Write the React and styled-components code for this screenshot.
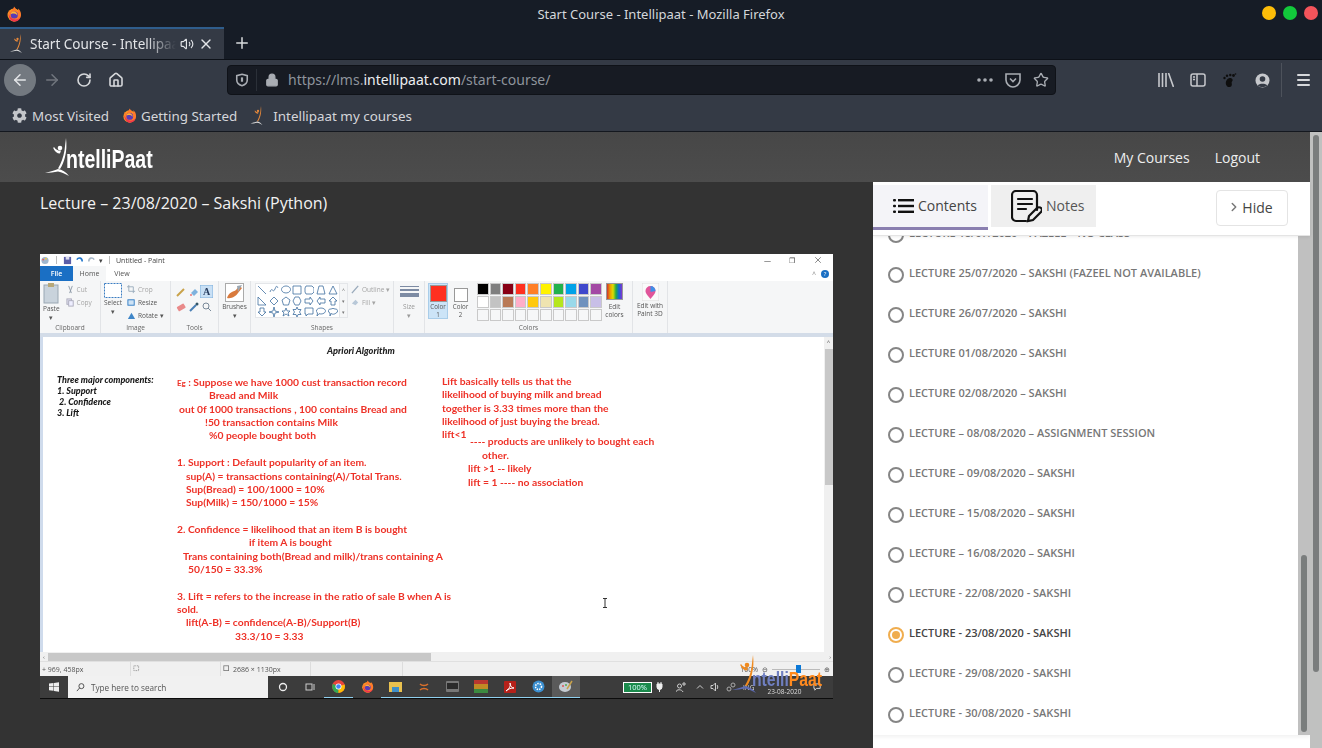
import React from "react";
import styled, { createGlobalStyle } from "styled-components";
import { FaCog } from "react-icons/fa";
import {
  ArrowLeft,
  ArrowRight,
  RotateCw,
  Home,
  Lock,
  Star,
  Plus,
  X,
  Volume2,
  ChevronRight,
} from "lucide-react";

const lectures = [
  "LECTURE 18/07/2020 – FAZEEL – NO CLASS",
  "LECTURE 25/07/2020 – SAKSHI (FAZEEL NOT AVAILABLE)",
  "LECTURE 26/07/2020 – SAKSHI",
  "LECTURE 01/08/2020 – SAKSHI",
  "LECTURE 02/08/2020 – SAKSHI",
  "LECTURE – 08/08/2020 – ASSIGNMENT SESSION",
  "LECTURE – 09/08/2020 – SAKSHI",
  "LECTURE – 15/08/2020 – SAKSHI",
  "LECTURE – 16/08/2020 – SAKSHI",
  "LECTURE - 22/08/2020 - SAKSHI",
  "LECTURE - 23/08/2020 - SAKSHI",
  "LECTURE - 29/08/2020 - SAKSHI",
  "LECTURE - 30/08/2020 - SAKSHI",
];

const redLines = [
  [0, <><small>Eg</small> : Suppose we have 1000 cust transaction record</>],
  [32, "Bread and Milk"],
  [2, "out 0f 1000 transactions , 100 contains Bread and"],
  [28, "!50 transaction contains Milk"],
  [32, "%0 people bought both"],
  [0, ""],
  [0, "1. Support : Default popularity of an item."],
  [9, "sup(A) = transactions containing(A)/Total Trans."],
  [9, "Sup(Bread) = 100/1000 = 10%"],
  [9, "Sup(Milk) = 150/1000 = 15%"],
  [0, ""],
  [0, "2. Confidence = likelihood that an item B is bought"],
  [72, "if item A is bought"],
  [6, "Trans containing both(Bread and milk)/trans containing A"],
  [11, "50/150 = 33.3%"],
  [0, ""],
  [0, "3. Lift = refers to the increase in the ratio of sale B when A is"],
  [0, "sold."],
  [9, "lift(A-B) = confidence(A-B)/Support(B)"],
  [58, "33.3/10 = 3.33"],
];

const liftLines = [
  [0, "Lift basically tells us that the"],
  [0, "likelihood of buying milk and bread"],
  [0, "together is 3.33 times more than the"],
  [0, "likelihood of just buying the bread."],
  [0, "lift<1", 7],
  [28, "---- products are unlikely to bought each"],
  [40, "other."],
  [26, "lift >1 -- likely"],
  [26, "lift = 1 ---- no association"],
];

const swatches = [
  "#000000", "#7f7f7f", "#880015", "#ff3020", "#ff7f27", "#fff200", "#22b14c", "#00a2e8", "#3f48cc", "#a349a4",
  "#ffffff", "#c3c3c3", "#b97a57", "#ffaec9", "#ffc90e", "#efe4b0", "#b5e61d", "#99d9ea", "#7092be", "#c8bfe7",
  "none", "none", "none", "none", "none", "none", "none", "none", "none", "none",
];

const shapePaths = [
  "M1 1L9 9", "M1 7C3 1 4 9 6 4S8 2 9 3", "M5 1a4.5 3.5 0 1 0 .01 0", "M1 1h8v8H1z", "M2 1h6l2 2v4l-2 2H2L1 7V3z", "M1 9L3 1h4l2 8z", "M5 1l4 8H1z",
  "M1 1v8h8z", "M5 1l4 4-4 4-4-4z", "M5 1l4 3-1.500 5h-5L1 4z", "M3 1h4l2 4-2 4H3L1 5z", "M1 3h5V1l3 4-3 4V7H1z", "M9 3H4V1L1 5l3 4V7h5z", "M5 1l4 4H7v4H3V5H1z",
  "M5 9l4-4H7V1H3v4H1z", "M5 0l1 4 4 1-4 1-1 4-1-4-4-1 4-1z", "M5 1l1.200 3H9L7 6l1 3-3-2-3 2 1-3-2-2h2.800z", "M5 0l1 2.500h3L7.500 5 9 7.500H6L5 10 4 7.500H1L2.500 5 1 2.500h3z", "M1 1h8v6H4L2 9V7H1z", "M5 1a4.500 3 0 1 1-2 5.700L1 9l.5-3A4.500 3 0 0 1 5 1z", "M3 2a3 2 0 0 1 4 0 2 2 0 0 1 1 4 3 2 0 0 1-5 .5L2 9V6a2 2 0 0 1 1-4z",
];

const GlobalStyle = createGlobalStyle`
  html, body {
    margin: 0;
    padding: 0;
    height: 100%;
    overflow: hidden;
    background: #333;
  }
  * {
    box-sizing: border-box;
  }
  body {
    font-family: "Noto Sans", "Open Sans", sans-serif;
  }
`;

const Window = styled.div`
  width: 1322px;
  height: 748px;
  display: flex;
  flex-direction: column;
  overflow: hidden;
`;

const TitleBar = styled.div`
  height: 27px;
  flex: none;
  background: #161c26;
  display: flex;
  align-items: center;
  justify-content: space-between;
  padding: 0 4px 0 6px;
  color: #d4d7db;
  font-size: 13px;
`;

const TitleText = styled.span`
  padding-left: 38px;
`;

const Dots = styled.div`
  display: flex;
  gap: 7px;
  padding-bottom: 2px;
`;

const Dot = styled.span`
  width: 14px;
  height: 14px;
  border-radius: 50%;
  background: ${(p) => p.color};
`;

const TabStrip = styled.div`
  height: 33px;
  flex: none;
  background: #161c26;
  display: flex;
  align-items: stretch;
  border-bottom: 1px solid #0d1118;
`;

const Tab = styled.div`
  width: 224px;
  background: #343a45;
  border-top: 2px solid #2f5d8c;
  display: flex;
  align-items: center;
  padding: 0 10px 0 9px;
  color: #e2e4e7;
  font-size: 13.500px;
  gap: 4px;
`;

const TabTitle = styled.span`
  flex: 1;
  white-space: nowrap;
  overflow: hidden;
  mask-image: linear-gradient(to right, #000 80%, transparent 100%);
`;

const NewTab = styled.div`
  width: 36px;
  display: flex;
  align-items: center;
  justify-content: center;
  color: #d8dadd;
`;

const Toolbar = styled.div`
  height: 40px;
  flex: none;
  background: #343a45;
  display: flex;
  align-items: center;
  padding: 0 4px;
  color: #d6d8db;
`;

const BackButton = styled.div`
  width: 32px;
  height: 32px;
  border-radius: 50%;
  background: #737980;
  display: flex;
  align-items: center;
  justify-content: center;
  color: #e4e6e8;
`;

const ToolButton = styled.div`
  width: 32px;
  height: 32px;
  display: flex;
  align-items: center;
  justify-content: center;
  color: ${(p) => (p.$dim ? "#71767e" : "#d6d8db")};
`;

const UrlBar = styled.div`
  width: 829px;
  height: 30px;
  margin-left: 95px;
  background: #171b23;
  border: 1px solid #0f1218;
  border-radius: 4px;
  display: flex;
  align-items: center;
  font-size: 14px;
  color: #8e949c;
`;

const UrlIcons = styled.div`
  width: 29px;
  height: 22px;
  display: flex;
  align-items: center;
  justify-content: center;
  border-right: 1px solid #2b3038;
  color: #a9adb3;
`;

const LockSlot = styled.div`
  width: 31px;
  padding-left: 8px;
  display: flex;
  align-items: center;
  color: #a9adb3;
`;

const UrlText = styled.div`
  flex: 1;
  margin-bottom: 2px;
  b {
    font-weight: 400;
    color: #eceef0;
  }
`;

const UrlAction = styled.div`
  width: 28px;
  display: flex;
  align-items: center;
  justify-content: center;
  color: #a9adb3;
`;

const ToolbarRight = styled.div`
  display: flex;
  align-items: center;
  margin-left: 94px;
`;

const Slot = styled.div`
  width: 32px;
  display: flex;
  align-items: center;
  justify-content: center;
  color: #c6c8cc;
`;

const Divider = styled.div`
  width: 1px;
  height: 34px;
  background: #4d525b;
  margin: 0 15px 0 3px;
`;

const BookmarksBar = styled.div`
  height: 32px;
  flex: none;
  background: #343a45;
  border-bottom: 1px solid #14181f;
  display: flex;
  align-items: center;
  padding: 0 12px;
  font-size: 13.400px;
  color: #dfe1e4;
  gap: 13px;
`;

const Bookmark = styled.div`
  display: flex;
  align-items: center;
  gap: ${(p) => p.$gap || 4}px;
  color: #d4d6da;
  svg:first-child {
    flex: none;
  }
`;

const SitePage = styled.div`
  flex: 1;
  display: flex;
  min-height: 0;
`;

const PageMain = styled.div`
  flex: 1;
  display: flex;
  flex-direction: column;
  min-width: 0;
`;

const PageScrollbar = styled.div`
  width: 12px;
  background: #c0c1c0;
  padding: 3px 3px 0;
`;

const PageThumb = styled.div`
  height: 537px;
  background: #7a7d7d;
  border-radius: 3px;
`;

const SiteHeader = styled.header`
  height: 50px;
  flex: none;
  background: linear-gradient(#474747, #4c4c4c);
  display: flex;
  align-items: center;
  justify-content: space-between;
  padding: 0 50px 0 45px;
`;

const Logo = styled.div`
  display: flex;
  align-items: flex-end;
  height: 42px;
  color: ${(p) => p.$color || "#fff"};
  position: relative;
  white-space: nowrap;
`;

const LogoWord = styled.span`
  display: inline-block;
  font-family: "Liberation Sans", sans-serif;
  font-weight: 700;
  font-size: ${(p) => p.$size || 25}px;
  line-height: 1;
  margin-left: ${(p) => p.$offset ?? -9}px;
  padding-bottom: ${(p) => p.$pad ?? 6}px;
  transform: scaleX(${(p) => p.$squeeze || 0.78});
  transform-origin: left bottom;
  color: ${(p) => p.$first || "inherit"};
  em {
    font-style: normal;
    color: ${(p) => p.$second || "inherit"};
  }
`;

const SiteNav = styled.nav`
  display: flex;
  gap: 25px;
  font-family: "Open Sans", sans-serif;
  font-size: 14px;
  color: #eee;
`;

const Body = styled.div`
  flex: 1;
  display: flex;
  background: #333;
  min-height: 0;
`;

const VideoArea = styled.main`
  width: 873px;
  flex: none;
  padding: 11px 40px 0;
`;

const LectureTitle = styled.h1`
  margin: 0 0 40px;
  height: 21px;
  font-family: "Open Sans", sans-serif;
  font-weight: 400;
  font-size: 16px;
  line-height: 21px;
  color: #f2f2f2;
`;

const Sidebar = styled.aside`
  flex: 1;
  background: #fff;
  display: flex;
  flex-direction: column;
  min-height: 0;
`;

const SideTabs = styled.div`
  height: 54px;
  flex: none;
  position: relative;
  z-index: 2;
  background: #fff;
  border-bottom: 1px solid #e4e4e4;
  box-shadow: 0 1px 3px rgba(0, 0, 0, 0.08);
  display: flex;
  align-items: flex-start;
  padding: 3px 22px 0 0;
  gap: 3px;
  font-family: "Open Sans", sans-serif;
  font-size: 14px;
  color: #555;
`;

const ContentsTab = styled.div`
  width: 115px;
  height: 45px;
  background: #f4f4f8;
  border-bottom: 3px solid #8a7fb0;
  display: flex;
  align-items: center;
  padding: 0 0 1px 20px;
  gap: 4px;
  color: #444;
`;

const NotesTab = styled.div`
  width: 105px;
  height: 42px;
  background: #efefef;
  display: flex;
  align-items: center;
  padding: 0 0 2px 20px;
  gap: 4px;
  svg {
    margin-top: 2px;
  }
`;

const HideButton = styled.button`
  margin: 5px 0 0 auto;
  width: 72px;
  height: 36px;
  background: #fff;
  border: 1px solid #e4e4e4;
  border-radius: 4px;
  display: flex;
  align-items: center;
  justify-content: center;
  gap: 1px;
  font-family: "Open Sans", sans-serif;
  font-size: 14px;
  color: #444;
  padding: 0 4px 2px 0;
  svg {
    color: #777;
  }
`;

const ListWrap = styled.div`
  height: 499px;
  flex: none;
  display: flex;
  box-shadow: 0 2px 4px rgba(0, 0, 0, 0.06);
`;

const ListBody = styled.div`
  flex: 1;
  overflow: hidden;
`;

const LectureList = styled.ul`
  list-style: none;
  margin: -23px 0 0;
  padding: 0 0 0 15px;
`;

const Lecture = styled.li`
  height: 40px;
  display: flex;
  align-items: center;
  gap: 5px;
  font-family: "Open Sans", sans-serif;
  font-size: 11px;
  font-weight: 600;
  color: ${(p) => (p.$active ? "#444" : "#777")};
`;

const LectureText = styled.span`
  position: relative;
  top: -1px;
`;

const Radio = styled.span`
  width: 16px;
  height: 16px;
  flex: none;
  border-radius: 50%;
  border: 2px solid ${(p) => (p.$active ? "#f0ad4e" : "#858585")};
  position: relative;
  top: 2px;
  display: flex;
  align-items: center;
  justify-content: center;
  &::after {
    content: "";
    display: ${(p) => (p.$active ? "block" : "none")};
    width: 8px;
    height: 8px;
    border-radius: 50%;
    background: #f0ad4e;
  }
`;

const ListScrollbar = styled.div`
  width: 12px;
  flex: none;
  background: #c0c0c0;
  padding: 319px 3px 3px;
`;

const ListThumb = styled.div`
  height: 177px;
  background: #7a7d7d;
  border-radius: 3px;
`;

/* the paint screenshot playing in the lecture */
const Shot = styled.div`
  width: 793px;
  height: 445px;
  background: #fff;
  display: flex;
  flex-direction: column;
  position: relative;
  filter: blur(0.25px);
  font-family: "Open Sans", sans-serif;
  color: #555;
`;

const PaintTitle = styled.div`
  height: 12px;
  flex: none;
  display: flex;
  align-items: center;
  padding: 0 10px 0 0;
  gap: 3px;
  font-size: 7px;
  color: #444;
`;

const TitleSep = styled.span`
  width: 1px;
  height: 8px;
  background: #bbb;
  margin: 0 3px;
`;

const WindowButtons = styled.div`
  margin-left: auto;
  display: flex;
  gap: 18px;
  color: #444;
  align-items: center;
`;

const PaintMenu = styled.div`
  height: 15px;
  flex: none;
  display: flex;
  align-items: stretch;
  font-size: 7px;
  padding-right: 4px;
`;

const MenuItem = styled.div`
  width: ${(p) => p.$w}px;
  display: flex;
  align-items: center;
  justify-content: center;
  background: ${(p) => (p.$file ? "#1a6fc4" : p.$active ? "#f5f6f7" : "#fff")};
  color: ${(p) => (p.$file ? "#fff" : "#555")};
  font-weight: ${(p) => (p.$file ? 600 : 400)};
`;

const MenuRight = styled.div`
  margin-left: auto;
  display: flex;
  align-items: center;
  gap: 5px;
  color: #999;
`;

const Help = styled.span`
  width: 8px;
  height: 8px;
  border-radius: 50%;
  background: #1a6fc4;
  color: #fff;
  font-size: 6px;
  line-height: 8px;
  text-align: center;
`;

const Ribbon = styled.div`
  height: 52px;
  flex: none;
  background: #f5f6f7;
  display: flex;
`;

const RibbonGroup = styled.div`
  width: ${(p) => p.$w}px;
  flex: none;
  display: flex;
  flex-direction: column;
  border-right: 1px solid #e2e4e7;
`;

const GroupBody = styled.div`
  flex: 1;
  display: flex;
  gap: ${(p) => p.$gap || 3}px;
  padding: 2px 3px 0;
  justify-content: ${(p) => p.$justify || "flex-start"};
  min-height: 0;
`;

const GroupLabel = styled.div`
  height: 10px;
  flex: none;
  text-align: center;
  font-size: 6.500px;
  line-height: 9px;
  color: #666;
`;

const BigTool = styled.div`
  display: flex;
  flex-direction: column;
  align-items: center;
  font-size: 6.500px;
  line-height: 8px;
  color: ${(p) => p.$color || "#555"};
  width: ${(p) => (p.$w ? `${p.$w}px` : "auto")};
  text-align: center;
  gap: 1px;
`;

const SmallTools = styled.div`
  display: flex;
  flex-direction: column;
  gap: 2px;
  padding-top: 1px;
  font-size: 6.500px;
  color: ${(p) => p.$color || "#555"};
`;

const SmallTool = styled.div`
  display: flex;
  align-items: center;
  gap: 2px;
  height: 11px;
  white-space: nowrap;
  color: ${(p) => p.$color || "inherit"};
`;

const ToolGrid = styled.div`
  display: grid;
  grid-template-columns: repeat(3, 13px);
  grid-auto-rows: 15px;
  align-items: center;
  justify-items: center;
  padding-top: 1px;
`;

const ShapeBox = styled.div`
  width: 85px;
  height: 35px;
  margin-left: 1px;
  background: #fff;
  border: 1px solid #e4e6e9;
  display: grid;
  grid-template-columns: repeat(7, 1fr);
  align-items: center;
  justify-items: center;
  color: #3f6f9f;
`;

const ShapeSpin = styled.div`
  width: 8px;
  height: 35px;
  border: 1px solid #e4e6e9;
  border-left: 0;
  margin-left: -3px;
  font-size: 5px;
  display: flex;
  flex-direction: column;
  justify-content: space-around;
  align-items: center;
  color: #777;
`;

const SizeLines = styled.div`
  width: 19px;
  display: flex;
  flex-direction: column;
  gap: 2px;
  margin: 3px 0 5px;
`;

const SizeLine = styled.div`
  height: ${(p) => p.$h}px;
  background: #7d8ba3;
`;

const ColorSlot = styled.div`
  width: ${(p) => p.$w || 20}px;
  height: 36px;
  padding-top: 1px;
  background: ${(p) => (p.$on ? "#cce4f7" : "transparent")};
  border: 1px solid ${(p) => (p.$on ? "#a9cde9" : "transparent")};
  display: flex;
  flex-direction: column;
  align-items: center;
  font-size: 6.200px;
  line-height: 7.500px;
  text-align: center;
  color: #555;
`;

const ColorChip = styled.div`
  width: ${(p) => p.$s}px;
  height: ${(p) => p.$s}px;
  background: ${(p) => p.$c};
  border: 1px solid #999;
  margin: ${(p) => 17 - p.$s}px 0 1px;
`;

const Palette = styled.div`
  display: grid;
  grid-template-columns: repeat(10, 11.600px);
  grid-auto-rows: 12px;
  gap: 1px;
  margin: 0 1px 0 4px;
`;

const Swatch = styled.div`
  background: ${(p) => (p.$c === "none" ? "#f6f7f8" : p.$c)};
  border: 1px solid #c9c9c9;
`;

const RainbowChip = styled.div`
  width: 17px;
  height: 17px;
  background: linear-gradient(90deg, #c33, #e90, #dd0, #2a4, #16d, #83c);
  border: 1px solid #999;
  margin-bottom: 2px;
`;

const Strip = styled.div`
  height: 4px;
  flex: none;
  background: #d3dce8;
`;

const CanvasRow = styled.div`
  height: 315px;
  flex: none;
  display: flex;
`;

const CanvasEdge = styled.div`
  width: 3px;
  background: #cfdbec;
`;

const Canvas = styled.div`
  flex: 1;
  display: grid;
  grid-template-columns: 120px 265px 1fr;
  grid-template-rows: auto 1fr;
  padding: 8px 0 0 14px;
  font-family: Lato, "Open Sans", sans-serif;
  font-weight: 700;
  font-size: 10.300px;
  line-height: 13.370px;
  color: #ee3127;
`;

const CanvasTitle = styled.div`
  grid-column: 1 / -1;
  padding-left: 270px;
  height: 24px;
  font-size: 9.200px;
  font-style: italic;
  font-weight: 900;
  line-height: 11px;
  color: #222;
`;

const BlackNotes = styled.div`
  font-size: 9px;
  font-style: italic;
  font-weight: 900;
  line-height: 11px;
  color: #1a1a1a;
  padding-top: 5px;
  white-space: pre;
`;

const RedNotes = styled.div`
  white-space: nowrap;
  padding-top: ${(p) => p.$top}px;
  small {
    font-size: 8px;
  }
`;

const NoteLine = styled.div`
  height: ${(p) => p.$h || 13.37}px;
  padding-left: ${(p) => p.$indent}px;
`;

const VScroll = styled.div`
  width: 9px;
  background: #f0f0f0;
  display: flex;
  flex-direction: column;
  align-items: center;
  font-size: 6px;
  color: #666;
  padding-top: 1px;
`;

const VThumb = styled.div`
  width: 8px;
  height: 136px;
  background: #c8c8c8;
  margin-top: 3px;
`;

const HScroll = styled.div`
  height: 9px;
  flex: none;
  background: #f0f0f0;
  display: flex;
  align-items: center;
  font-size: 6px;
  color: #666;
  padding: 0 2px 0 3px;
`;

const HThumb = styled.div`
  width: 383px;
  height: 8px;
  background: #c8c8c8;
  margin-left: 3px;
`;

const ScrollEnd = styled.span`
  margin-left: auto;
`;

const StatusBar = styled.div`
  height: 15px;
  flex: none;
  background: #f0f0f0;
  border-top: 1px solid #e0e0e0;
  display: flex;
  align-items: center;
  font-size: 7px;
  color: #555;
`;

const StatusCell = styled.div`
  width: ${(p) => p.$w}px;
  height: 100%;
  display: flex;
  align-items: center;
  gap: 2px;
  padding-left: 2px;
  border-right: 1px solid #ddd;
`;

const ZoomSlider = styled.div`
  margin-left: auto;
  display: flex;
  align-items: center;
  gap: 4px;
  padding-right: 3px;
`;

const ZoomTrack = styled.div`
  width: 48px;
  height: 1px;
  background: #bbb;
  position: relative;
  &::after {
    content: "";
    position: absolute;
    left: 24px;
    top: -4px;
    width: 5px;
    height: 8px;
    background: #0a78d7;
  }
`;

const Taskbar = styled.div`
  height: 23px;
  flex: none;
  background: #3c3c3c;
  border-bottom: 1px solid #0c0c0c;
  display: flex;
  align-items: stretch;
  color: #e4e4e4;
`;

const StartButton = styled.div`
  width: 28px;
  display: flex;
  align-items: center;
  justify-content: center;
`;

const SearchBox = styled.div`
  width: 200px;
  background: #f1f1f1;
  color: #555;
  display: flex;
  align-items: center;
  gap: 6px;
  padding-left: 8px;
  font-size: 8.200px;
`;

const TaskIcons = styled.div`
  display: flex;
  align-items: stretch;
  padding-left: 1px;
`;

const TaskIcon = styled.div`
  width: ${(p) => p.$w || 28.500}px;
  display: flex;
  align-items: center;
  justify-content: center;
  background: ${(p) => (p.$on ? "#5a5a5a" : "transparent")};
  border-bottom: 1px solid ${(p) => (p.$open ? "#8fd0ef" : "transparent")};
`;

const Tray = styled.div`
  flex: 1;
  display: flex;
  align-items: center;
  padding-left: 43px;
  font-size: 6.500px;
  color: #ddd;
  white-space: nowrap;
`;

const TrayItem = styled.span`
  margin-left: ${(p) => p.$gap || 0}px;
  display: flex;
  align-items: center;
`;

const Battery = styled.div`
  width: 29px;
  height: 11px;
  background: #1b8a4c;
  border: 1px solid #fff;
  font-size: 7.500px;
  line-height: 9px;
  text-align: center;
  color: #dff;
`;

const Clock = styled.div`
  margin-left: 13px;
  padding-top: 8px;
  text-align: center;
`;

const Watermark = styled.div`
  position: absolute;
  left: 692px;
  top: 399px;
  height: 42px;
`;

const TextCursor = styled.svg`
  position: absolute;
  left: 562px;
  top: 344px;
`;

function FoxIcon({ size = 16 }) {
  return (
    <svg width={size} height={size} viewBox="0 0 16 16">
      <circle cx="8" cy="9" r="6.500" fill="#ff9a22" />
      <path d="M3 4C2 8 3 15 8 15.500c4 0 7-3 7-7 0-3-1.500-5-3-6 .5 2 0 3-1 3.500C11 3 9 2 8 .5 8 3 5 4 5 6 4 6 3.500 5 3 4z" fill="#ff7a2a" />
      <path d="M2.500 8c0 4 2.500 7.500 6 7.500 3 0 5.500-2 6-4.500-2 2.500-5 3-7.500 2-2-1-3.500-3-4.500-5z" fill="#f0344d" />
      <circle cx="8.300" cy="9" r="3.600" fill="#5b3bb5" />
      <path d="M5 7c1-1.500 3-1.800 4.500-1 1.500.8 2 2.500 1.800 3.500-.6-1.300-2-2-3.300-2-1 0-2 0-3 .5z" fill="#ffb534" />
    </svg>
  );
}

function FigureMark({ w = 20, h = 24, body = "#e8893a", swoosh = "#ddd" }) {
  return (
    <svg width={w} height={h} viewBox="0 0 30 40">
      <path d="M21 0c.8 7 .5 13-1 19-1 4-3 9-5 12l-2-.5c3-5 5.500-12 6.500-18C20 8 20.500 4 21 0z" fill={body} />
      <circle cx="15" cy="10" r="2.300" fill={body} />
      <path d="M9 9c2 3 5 4 7 3.500l-1 3c-3 0-5.500-2-6.800-5.500z" fill={body} />
      <path d="M0 35c5-1 10-3 13-4 4 .5 8 3 11 7-4-2-7-4-11-4.500-4 .5-8 1.500-13 1.500z" fill={swoosh} />
    </svg>
  );
}

function ChromeIcon() {
  return (
    <svg width="13" height="13" viewBox="0 0 16 16">
      <circle cx="8" cy="8" r="8" fill="#e8453c" />
      <path d="M8 8L1 4.500A8 8 0 0 0 8 16z" fill="#34a853" />
      <path d="M8 8l7.500-2.500A8 8 0 0 1 8 16z" fill="#fbbc05" />
      <circle cx="8" cy="8" r="3.700" fill="#fff" />
      <circle cx="8" cy="8" r="2.800" fill="#4285f4" />
    </svg>
  );
}

function Mini({ w = 10, h = 10, vb = "0 0 10 10", children }) {
  return (
    <svg width={w} height={h} viewBox={vb}>
      {children}
    </svg>
  );
}

function PaintShot() {
  return (
    <Shot>
      <PaintTitle>
        <Mini w={10} h={9}>
          <circle cx="5" cy="5" r="4" fill="#9fb7cf" />
          <circle cx="3" cy="4" r="1" fill="#e55" />
          <circle cx="6" cy="3" r="1" fill="#fc3" />
        </Mini>
        <TitleSep />
        <Mini w={9} h={9}>
          <rect x="1" y="1" width="8" height="8" fill="#5a5ea8" />
          <rect x="3" y="1" width="4" height="3" fill="#dde" />
        </Mini>
        <Mini w={9} h={9}>
          <path d="M2 4C4 1 8 2 8 6" stroke="#2277cc" strokeWidth="1.800" fill="none" />
        </Mini>
        <Mini w={9} h={9}>
          <path d="M8 4C6 1 2 2 2 6" stroke="#a8b8c8" strokeWidth="1.800" fill="none" />
        </Mini>
        <span>▾</span>
        <TitleSep />
        <span>Untitled - Paint</span>
        <WindowButtons>
          <span>—</span>
          <span>❐</span>
          <X size={10} strokeWidth={1.500} />
        </WindowButtons>
      </PaintTitle>
      <PaintMenu>
        <MenuItem $file $w={33}>File</MenuItem>
        <MenuItem $active $w={33}>Home</MenuItem>
        <MenuItem $w={32}>View</MenuItem>
        <MenuRight>
          <span>˄</span>
          <Help>?</Help>
        </MenuRight>
      </PaintMenu>
      <Ribbon>
        <RibbonGroup $w={61}>
          <GroupBody $gap={6}>
            <BigTool>
              <Mini w={16} h={21} vb="0 0 16 21">
                <rect x="1" y="2" width="14" height="18" fill="#c9d3dc" stroke="#9aa7b3" />
                <rect x="5" y="0" width="6" height="4" fill="#b8a878" />
              </Mini>
              <span>Paste</span>
              <span>▾</span>
            </BigTool>
            <SmallTools $color="#a5a5a5">
              <SmallTool>
                <Mini w={9} h={9}><path d="M3 1l3 8M7 1L4 9" stroke="#8a97a5" fill="none" /></Mini>Cut
              </SmallTool>
              <SmallTool>
                <Mini w={9} h={9}><rect x="1" y="1" width="5" height="6" fill="#dde" stroke="#aab" /><rect x="3" y="3" width="5" height="6" fill="#eef" stroke="#aab" /></Mini>Copy
              </SmallTool>
            </SmallTools>
          </GroupBody>
          <GroupLabel>Clipboard</GroupLabel>
        </RibbonGroup>
        <RibbonGroup $w={70}>
          <GroupBody $gap={5}>
            <BigTool>
              <Mini w={18} h={15} vb="0 0 18 15">
                <rect x="0.500" y="0.500" width="17" height="14" fill="#fff" stroke="#3a7cc2" strokeDasharray="2 1" />
              </Mini>
              <span>Select</span>
              <span>▾</span>
            </BigTool>
            <SmallTools>
              <SmallTool $color="#a5a5a5">
                <Mini w={9} h={9}><path d="M2 0v7h7M0 2h7v7" stroke="#9ab" fill="none" /></Mini>Crop
              </SmallTool>
              <SmallTool>
                <Mini w={9} h={9}><rect x="1" y="2" width="7" height="6" fill="#cfe3f5" stroke="#2a78c4" /></Mini>Resize
              </SmallTool>
              <SmallTool>
                <Mini w={9} h={9}><path d="M1 9l4-7 4 7z" fill="#3f86c8" /></Mini>Rotate ▾
              </SmallTool>
            </SmallTools>
          </GroupBody>
          <GroupLabel>Image</GroupLabel>
        </RibbonGroup>
        <RibbonGroup $w={48}>
          <GroupBody>
            <ToolGrid>
              <Mini><path d="M1 9L8 2" stroke="#c9a24a" strokeWidth="2" /></Mini>
              <Mini><path d="M2 6l4-4 3 3-4 4z" fill="#7fb2dd" /><circle cx="2" cy="8" r="1" fill="#e77" /></Mini>
              <Mini w={13} h={13} vb="0 0 13 13">
                <rect width="13" height="13" fill="#c9e0f5" stroke="#7fb0dc" />
                <text x="6.500" y="10" fontSize="10" fontFamily="Liberation Serif" fontWeight="700" textAnchor="middle" fill="#24395c">A</text>
              </Mini>
              <Mini><rect x="1" y="3" width="8" height="5" rx="1" fill="#e98a8a" transform="rotate(-30 5 5)" /></Mini>
              <Mini><path d="M1 9l6-6" stroke="#4a7fb5" strokeWidth="2" /><circle cx="8" cy="2" r="1.500" fill="#356" /></Mini>
              <Mini><circle cx="4" cy="4" r="3" fill="none" stroke="#7a8a9a" /><path d="M6 6l3 3" stroke="#7a8a9a" /></Mini>
            </ToolGrid>
          </GroupBody>
          <GroupLabel>Tools</GroupLabel>
        </RibbonGroup>
        <RibbonGroup $w={32}>
          <GroupBody $justify="center">
            <BigTool>
              <Mini w={19} h={19} vb="0 0 19 19">
                <rect x="0.500" y="0.500" width="18" height="18" fill="#fff" stroke="#aaa" />
                <path d="M2 15c2-6 6-6 9-8l3-4 3 2-4 5c-2 3-6 6-11 5z" fill="#d97a3c" />
                <path d="M12 3l5-1-4 7z" fill="#9aa7b3" />
              </Mini>
              <span>Brushes</span>
              <span>▾</span>
            </BigTool>
          </GroupBody>
        </RibbonGroup>
        <RibbonGroup $w={143}>
          <GroupBody $gap={3}>
            <ShapeBox>
              {shapePaths.map((d, i) => (
                <Mini key={i}>
                  <path d={d} fill="none" stroke="currentColor" strokeWidth="0.800" />
                </Mini>
              ))}
            </ShapeBox>
            <ShapeSpin>
              <span>˄</span>
              <span>▾</span>
              <span>▾</span>
            </ShapeSpin>
            <SmallTools $color="#a5a5a5">
              <SmallTool>
                <Mini w={9} h={9}><path d="M1 9l7-8" stroke="#9ab" strokeWidth="1.500" /></Mini>Outline ▾
              </SmallTool>
              <SmallTool>
                <Mini w={9} h={9}><path d="M1 6l4-4 3 3-3 3z" fill="#b8c8d8" /></Mini>Fill ▾
              </SmallTool>
            </SmallTools>
          </GroupBody>
          <GroupLabel>Shapes</GroupLabel>
        </RibbonGroup>
        <RibbonGroup $w={31}>
          <GroupBody $justify="center">
            <BigTool $color="#999">
              <SizeLines>
                <SizeLine $h={1} />
                <SizeLine $h={2} />
                <SizeLine $h={4} />
              </SizeLines>
              <span>Size</span>
              <span>▾</span>
            </BigTool>
          </GroupBody>
        </RibbonGroup>
        <RibbonGroup $w={208}>
          <GroupBody $gap={2}>
            <ColorSlot $on>
              <ColorChip $c="#ff3020" $s={17} />
              Color 1
            </ColorSlot>
            <ColorSlot $w={21}>
              <ColorChip $c="#fff" $s={14} />
              Color 2
            </ColorSlot>
            <Palette>
              {swatches.map((c, i) => (
                <Swatch key={i} $c={c} />
              ))}
            </Palette>
            <BigTool $w={19}>
              <RainbowChip />
              <span>Edit colors</span>
            </BigTool>
          </GroupBody>
          <GroupLabel>Colors</GroupLabel>
        </RibbonGroup>
        <RibbonGroup $w={35}>
          <GroupBody $justify="center">
            <BigTool $w={30}>
              <Mini w={17} h={18} vb="0 0 17 18">
                <rect width="17" height="18" fill="#fafafa" stroke="#ddd" />
                <path d="M8.500 3a5 5 0 0 1 5 5c0 3-3 5-5 8-2-3-5-5-5-8a5 5 0 0 1 5-5z" fill="#e0559a" />
                <path d="M8.500 3a5 5 0 0 1 5 5l-5 1z" fill="#3f8fe8" />
              </Mini>
              <span>Edit with Paint 3D</span>
            </BigTool>
          </GroupBody>
        </RibbonGroup>
      </Ribbon>
      <Strip />
      <CanvasRow>
        <CanvasEdge />
        <Canvas>
          <CanvasTitle>Apriori Algorithm</CanvasTitle>
          <BlackNotes>
            {"Three major components:\n1. Support\n 2. Confidence\n3. Lift"}
          </BlackNotes>
          <RedNotes $top={7}>
            {redLines.map(([indent, text], i) => (
              <NoteLine key={i} $indent={indent}>{text}</NoteLine>
            ))}
          </RedNotes>
          <RedNotes $top={6}>
            {liftLines.map(([indent, text, h], i) => (
              <NoteLine key={i} $indent={indent} $h={h}>{text}</NoteLine>
            ))}
          </RedNotes>
        </Canvas>
        <VScroll>
          <span>˄</span>
          <VThumb />
        </VScroll>
      </CanvasRow>
      <HScroll>
        <span>‹</span>
        <HThumb />
        <ScrollEnd>›</ScrollEnd>
      </HScroll>
      <StatusBar>
        <StatusCell $w={91}>+ 969, 458px</StatusCell>
        <StatusCell $w={90}>
          <Mini w={8} h={8}><rect x="1" y="1" width="6" height="6" fill="none" stroke="#777" strokeDasharray="1 1" /></Mini>
        </StatusCell>
        <StatusCell $w={90}>
          <Mini w={8} h={8}><rect x="1" y="1" width="6" height="6" fill="none" stroke="#777" /></Mini>
          2686 × 1130px
        </StatusCell>
        <StatusCell $w={92} />
        <ZoomSlider>
          <span>100%</span>
          <span>⊖</span>
          <ZoomTrack />
          <span>⊕</span>
        </ZoomSlider>
      </StatusBar>
      <Taskbar>
        <StartButton>
          <Mini w={10} h={10}>
            <path d="M0 1.500L4.500 1v3.500H0zM5 1l5-.8v4.300H5zM0 5h4.500v3.800L0 8.200zM5 5h5v4.800L5 9z" fill="#eee" />
          </Mini>
        </StartButton>
        <SearchBox>
          <Mini w={9} h={9}><circle cx="6" cy="3.500" r="2.800" fill="none" stroke="#444" /><path d="M4 5.500L1 9" stroke="#444" /></Mini>
          Type here to search
        </SearchBox>
        <TaskIcons>
          <TaskIcon $w={27}><Mini w={10} h={10}><circle cx="5" cy="5" r="3.500" fill="none" stroke="#eee" strokeWidth="1.300" /></Mini></TaskIcon>
          <TaskIcon $w={28}><Mini w={10} h={10}><rect x="1" y="2" width="6" height="6" fill="none" stroke="#ccc" /><path d="M9 2v6" stroke="#ccc" /></Mini></TaskIcon>
          <TaskIcon $open $w={29}><ChromeIcon /></TaskIcon>
          <TaskIcon $w={28}><FoxIcon size={13} /></TaskIcon>
          <TaskIcon $open $w={29}><Mini w={13} h={12} vb="0 0 13 12"><rect y="1" width="13" height="10" fill="#e9c14f" /><rect x="3" y="6" width="7" height="5" fill="#3f8fc9" /></Mini></TaskIcon>
          <TaskIcon $open $w={28}><Mini w={12} h={12} vb="0 0 12 12"><path d="M2 3c2 2 6 2 8 0M2 9c2-2 6-2 8 0" stroke="#d9702c" strokeWidth="1.500" fill="none" /></Mini></TaskIcon>
          <TaskIcon $open $w={29}><Mini w={13} h={11} vb="0 0 13 11"><rect width="13" height="11" rx="1" fill="#777" /><rect x="1" y="2" width="11" height="6" fill="#2a2a2a" /></Mini></TaskIcon>
          <TaskIcon $open $w={28}><Mini w={14} h={13} vb="0 0 14 13"><rect width="14" height="4" fill="#b8372f" /><rect y="4" width="14" height="5" fill="#c08a25" /><rect y="9" width="14" height="4" fill="#3c8a40" /></Mini></TaskIcon>
          <TaskIcon $open $w={29}><Mini w={12} h={12} vb="0 0 12 12"><rect width="12" height="12" rx="1" fill="#b5211a" /><path d="M2 10c3-2 5-5 4-8 0 3 2 5 4 5-3 0-6 1-8 3z" fill="none" stroke="#fff" /></Mini></TaskIcon>
          <TaskIcon $open $w={28}><Mini w={13} h={13} vb="0 0 13 13"><circle cx="6.500" cy="6.500" r="6" fill="#3b8fd0" /><circle cx="6.500" cy="6.500" r="3" fill="none" stroke="#fff" strokeDasharray="1.500 1" strokeWidth="1.500" /></Mini></TaskIcon>
          <TaskIcon $on $open $w={28}><Mini w={14} h={13} vb="0 0 14 13"><ellipse cx="6" cy="7" rx="6" ry="5" fill="#c5cbd2" /><circle cx="4" cy="6" r="1" fill="#d55" /><circle cx="7" cy="5" r="1" fill="#5a5" /><path d="M8 9l5-8" stroke="#c9a24a" strokeWidth="1.500" /></Mini></TaskIcon>
        </TaskIcons>
        <Tray>
          <Battery>100%</Battery>
          <TrayItem $gap={4}>
            <Mini w={7} h={10} vb="0 0 7 10"><path d="M1 2h5v3a2.500 2.500 0 0 1-5 0zM2 0v2M5 0v2M3.500 7v3" stroke="#eee" fill="#eee" /></Mini>
          </TrayItem>
          <TrayItem $gap={13}>
            <Mini w={10} h={10}><circle cx="3.500" cy="4" r="2" fill="none" stroke="#ccc" /><path d="M0 10c0-3 6-3 7 0M7 1h2v2H7z" fill="none" stroke="#ccc" /></Mini>
          </TrayItem>
          <TrayItem $gap={10}>
            <Mini w={8} h={8} vb="0 0 8 8"><path d="M1 5.500L4 2.500l3 3" stroke="#ccc" fill="none" /></Mini>
          </TrayItem>
          <TrayItem $gap={6}>
            <Mini w={10} h={10}><path d="M1 3.500h2L5.500 1v8L3 6.500H1zM7 3c1 1 1 3 0 4" stroke="#ccc" fill="none" /></Mini>
          </TrayItem>
          <TrayItem $gap={6}>
            <Mini w={10} h={10}><circle cx="3" cy="7" r="2" fill="none" stroke="#aaa" /><circle cx="7" cy="3" r="2" fill="none" stroke="#aaa" /></Mini>
          </TrayItem>
          <TrayItem $gap={7}>ING</TrayItem>
          <Clock>23-08-2020</Clock>
          <TrayItem $gap={12}>
            <Mini w={9} h={9}><path d="M1 1h7v5H4L2 8V6H1z" fill="none" stroke="#ddd" /></Mini>
          </TrayItem>
        </Tray>
      </Taskbar>
      <Watermark>
        <Logo $color="#ff8a1f">
          <FigureMark w={30} h={40} body="#f08a1e" swoosh="#5d6bb0" />
          <LogoWord $size={21} $pad={6} $offset={-10} $squeeze={0.75} $first="#6f7fc0" $second="#ff8a1f">
            ntelli<em>Paat</em>
          </LogoWord>
        </Logo>
      </Watermark>
      <TextCursor width="6" height="10" viewBox="0 0 6 10">
        <path d="M1 .5h4M3 .5v9M1 9.500h4" stroke="#333" fill="none" />
      </TextCursor>
    </Shot>
  );
}

export default function App() {
  return (
    <>
      <GlobalStyle />
      <Window>
        <TitleBar>
          <FoxIcon />
          <TitleText>Start Course - Intellipaat - Mozilla Firefox</TitleText>
          <Dots>
            <Dot color="#fdbd08" />
            <Dot color="#12c93b" />
            <Dot color="#f4545b" />
          </Dots>
        </TitleBar>
        <TabStrip>
          <Tab>
            <FigureMark w={17} h={20} />
            <TabTitle>Start Course - Intellipaat</TabTitle>
            <Volume2 size={14} />
            <X size={16} />
          </Tab>
          <NewTab>
            <Plus size={18} />
          </NewTab>
        </TabStrip>
        <Toolbar>
          <BackButton>
            <ArrowLeft size={18} />
          </BackButton>
          <ToolButton $dim>
            <ArrowRight size={18} />
          </ToolButton>
          <ToolButton>
            <RotateCw size={16} strokeWidth={2.400} />
          </ToolButton>
          <ToolButton>
            <Home size={16} strokeWidth={2.400} />
          </ToolButton>
          <UrlBar>
            <UrlIcons>
              <svg width="14" height="14" viewBox="0 0 16 16" fill="none" stroke="currentColor" strokeWidth="1.800">
                <path d="M8 1.500l6 1.500v5c0 3-2.500 5.500-6 6.500-3.500-1-6-3.500-6-6.500V3z" />
                <path d="M8 5v5" strokeWidth="2.500" />
              </svg>
            </UrlIcons>
            <LockSlot>
              <Lock size={14} fill="currentColor" />
            </LockSlot>
            <UrlText>
              https://lms.<b>intellipaat.com</b>/start-course/
            </UrlText>
            <UrlAction>
              <svg width="16" height="4" viewBox="0 0 16 4" fill="currentColor">
                <circle cx="2" cy="2" r="1.800" />
                <circle cx="8" cy="2" r="1.800" />
                <circle cx="14" cy="2" r="1.800" />
              </svg>
            </UrlAction>
            <UrlAction>
              <svg width="16" height="15" viewBox="0 0 16 15" fill="none" stroke="currentColor" strokeWidth="1.600">
                <path d="M1 1h14v6c0 3.500-3.500 7-7 7s-7-3.500-7-7z" />
                <path d="M5 5.500l3 3 3-3" />
              </svg>
            </UrlAction>
            <UrlAction>
              <Star size={16} strokeWidth={2} />
            </UrlAction>
          </UrlBar>
          <ToolbarRight>
            <Slot>
              <svg width="16" height="14" viewBox="0 0 16 14" fill="none" stroke="currentColor" strokeWidth="1.600">
                <path d="M1 0v14M4.500 0v14M8 0v14M10.500 0l5 14" />
              </svg>
            </Slot>
            <Slot>
              <svg width="16" height="14" viewBox="0 0 16 14" fill="none" stroke="currentColor" strokeWidth="1.500">
                <rect x="1" y="1" width="14" height="12" rx="2" />
                <path d="M7 1v12M3 4h2M3 6.500h2" />
              </svg>
            </Slot>
            <Slot>
              <svg width="14" height="15" viewBox="0 0 14 15" fill="#0e0e0e">
                <path d="M6.500 5c3 0 4 2 2.500 3.500-1 1 .5 2.500-.5 4.500-1 1.500-4 1.500-5-.5C2 10 3 6 6.500 5z" />
                <circle cx="1.500" cy="5" r="1.200" />
                <circle cx="4" cy="2.800" r="1.200" />
                <circle cx="7.300" cy="2" r="1.200" />
                <circle cx="10.500" cy="2.500" r="1.400" />
                <circle cx="12.500" cy="1" r=".8" />
              </svg>
            </Slot>
            <Slot>
              <svg width="15" height="15" viewBox="0 0 15 15">
                <circle cx="7.500" cy="7.500" r="7" fill="currentColor" />
                <circle cx="7.500" cy="6" r="2.800" fill="#343a45" />
                <path d="M2.800 12.500c1-2.500 8.400-2.500 9.400 0-2.500 2-7 2-9.400 0z" fill="#343a45" />
              </svg>
            </Slot>
            <Divider />
            <svg width="13" height="12" viewBox="0 0 13 12" fill="#d6d8db">
              <rect width="13" height="2" rx="1" />
              <rect y="5" width="13" height="2" rx="1" />
              <rect y="10" width="13" height="2" rx="1" />
            </svg>
          </ToolbarRight>
        </Toolbar>
        <BookmarksBar>
          <Bookmark $gap={5}>
            <FaCog size={15} color="#c4c6ca" />
            Most Visited
          </Bookmark>
          <Bookmark>
            <FoxIcon size={15} />
            Getting Started
          </Bookmark>
          <Bookmark $gap={7}>
            <FigureMark w={16} h={20} />
            Intellipaat my courses
          </Bookmark>
        </BookmarksBar>
        <SitePage>
          <PageMain>
            <SiteHeader>
              <Logo>
                <FigureMark w={30} h={40} body="#fff" swoosh="#fff" />
                <LogoWord>ntelliPaat</LogoWord>
              </Logo>
              <SiteNav>
                <span>My Courses</span>
                <span>Logout</span>
              </SiteNav>
            </SiteHeader>
            <Body>
              <VideoArea>
                <LectureTitle>Lecture – 23/08/2020 – Sakshi (Python)</LectureTitle>
                <PaintShot />
              </VideoArea>
              <Sidebar>
                <SideTabs>
                  <ContentsTab>
                    <svg width="21" height="14" viewBox="0 0 21 14" fill="#111">
                      <rect y="0" width="3" height="2.600" rx="1" />
                      <rect y="5.700" width="3" height="2.600" rx="1" />
                      <rect y="11.400" width="3" height="2.600" rx="1" />
                      <rect x="5" y="0" width="16" height="2.400" />
                      <rect x="5" y="5.800" width="16" height="2.400" />
                      <rect x="5" y="11.600" width="16" height="2.400" />
                    </svg>
                    Contents
                  </ContentsTab>
                  <NotesTab>
                    <svg width="31" height="33" viewBox="0 0 31 33" fill="none" stroke="#111" strokeWidth="2.200" strokeLinecap="round">
                      <path d="M15 31H5a4 4 0 0 1-4-4V5a4 4 0 0 1 4-4h17a4 4 0 0 1 4 4v15" />
                      <path d="M7 9h14M7 14h14M7 19h8" />
                      <path d="M17 31l1-5 8-8c1-1 3-1 4 0s1 3 0 4l-8 8z" />
                    </svg>
                    Notes
                  </NotesTab>
                  <HideButton>
                    <ChevronRight size={14} strokeWidth={2.500} />
                    Hide
                  </HideButton>
                </SideTabs>
                <ListWrap>
                  <ListBody>
                    <LectureList>
                      {lectures.map((title, i) => (
                        <Lecture key={title} $active={i === 10}>
                          <Radio $active={i === 10} />
                          <LectureText>{title}</LectureText>
                        </Lecture>
                      ))}
                    </LectureList>
                  </ListBody>
                  <ListScrollbar>
                    <ListThumb />
                  </ListScrollbar>
                </ListWrap>
              </Sidebar>
            </Body>
          </PageMain>
          <PageScrollbar>
            <PageThumb />
          </PageScrollbar>
        </SitePage>
      </Window>
    </>
  );
}
